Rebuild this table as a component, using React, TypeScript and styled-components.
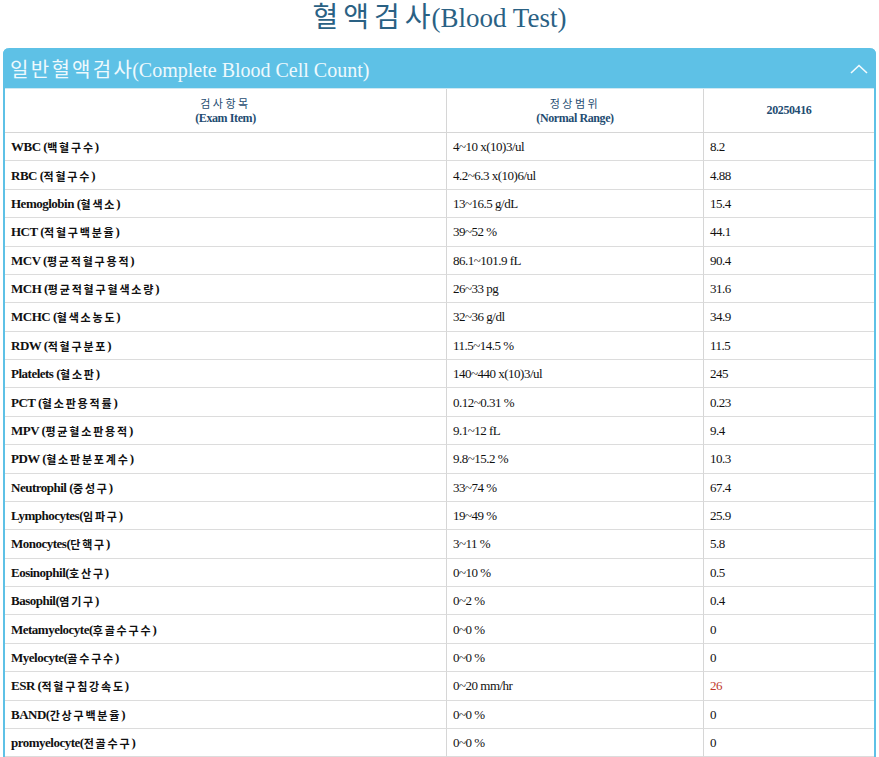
import * as React from 'react'
import styled, { createGlobalStyle } from 'styled-components'

const serif = `'Liberation Serif', 'Noto Sans CJK KR', serif`

const GlobalStyle = createGlobalStyle`
  html, body {
    margin: 0;
    padding: 0;
    background: #fff;
  }
  body {
    font-family: ${serif};
  }
`

type Row = { name: string; range: string; value: string; high?: boolean }

const rows: Row[] = [
  { name: 'WBC (백혈구수)', range: '4~10 x(10)3/ul', value: '8.2' },
  { name: 'RBC (적혈구수)', range: '4.2~6.3 x(10)6/ul', value: '4.88' },
  { name: 'Hemoglobin (혈색소)', range: '13~16.5 g/dL', value: '15.4' },
  { name: 'HCT (적혈구백분율)', range: '39~52 %', value: '44.1' },
  { name: 'MCV (평균적혈구용적)', range: '86.1~101.9 fL', value: '90.4' },
  { name: 'MCH (평균적혈구혈색소량)', range: '26~33 pg', value: '31.6' },
  { name: 'MCHC (혈색소농도)', range: '32~36 g/dl', value: '34.9' },
  { name: 'RDW (적혈구분포)', range: '11.5~14.5 %', value: '11.5' },
  { name: 'Platelets (혈소판)', range: '140~440 x(10)3/ul', value: '245' },
  { name: 'PCT (혈소판용적률)', range: '0.12~0.31 %', value: '0.23' },
  { name: 'MPV (평균혈소판용적)', range: '9.1~12 fL', value: '9.4' },
  { name: 'PDW (혈소판분포계수)', range: '9.8~15.2 %', value: '10.3' },
  { name: 'Neutrophil (중성구)', range: '33~74 %', value: '67.4' },
  { name: 'Lymphocytes(임파구)', range: '19~49 %', value: '25.9' },
  { name: 'Monocytes(단핵구)', range: '3~11 %', value: '5.8' },
  { name: 'Eosinophil(호산구)', range: '0~10 %', value: '0.5' },
  { name: 'Basophil(염기구)', range: '0~2 %', value: '0.4' },
  { name: 'Metamyelocyte(후골수구수)', range: '0~0 %', value: '0' },
  { name: 'Myelocyte(골수구수)', range: '0~0 %', value: '0' },
  { name: 'ESR (적혈구침강속도)', range: '0~20 mm/hr', value: '26', high: true },
  { name: 'BAND(간상구백분율)', range: '0~0 %', value: '0' },
  { name: 'promyelocyte(전골수구)', range: '0~0 %', value: '0' },
]

const Page = styled.div`
  width: 879px;
  height: 757px;
  overflow: hidden;
`

const Title = styled.h1`
  margin: 0;
  height: 48px;
  padding-top: 1px;
  box-sizing: border-box;
  text-align: center;
  font-family: ${serif};
  font-weight: 400;
  font-size: 27px;
  line-height: 34px;
  color: #2a6184;
`

const TitleKo = styled.span`
  font-size: 28px;
  letter-spacing: 5px;
  margin-right: -4px;
`

const Panel = styled.section`
  margin: 0 3px;
  border: 2px solid #5ec1e6;
  border-top: none;
  border-radius: 6px 6px 0 0;
`

const PanelHeader = styled.div`
  display: flex;
  align-items: center;
  justify-content: space-between;
  height: 40px;
  padding: 0 8px 0 7px;
  margin: 0 -2px;
  background: #5ec1e6;
  border-radius: 6px 6px 0 0;
  color: #eef9fd;
  font-family: ${serif};
  font-size: 20px;
`

const HeaderKo = styled.span`
  letter-spacing: 2.3px;
  margin-right: -2px;
`

const Chevron = styled.svg`
  width: 18px;
  height: 10px;
  margin-top: 2px;
`

const Table = styled.div`
  display: grid;
  grid-template-columns: 441px 257px 1fr;
  background: #fff;
  border-top: 1px solid #cfe9f3;
`

const HeadCell = styled.div<{ $first?: boolean }>`
  height: 44px;
  box-sizing: border-box;
  display: flex;
  flex-direction: column;
  align-items: center;
  justify-content: center;
  border-bottom: 1px solid #d6d6d6;
  border-left: ${({ $first }) => ($first ? 'none' : '1px solid #d6d6d6')};
  color: #1f4d72;
  font-size: 12px;
  line-height: 15px;
`

const HeadKo = styled.span`
  font-family: 'Noto Sans CJK KR', sans-serif;
  font-size: 11px;
  letter-spacing: 2.5px;
`

const HeadEn = styled.span`
  font-family: ${serif};
  font-weight: 700;
  letter-spacing: -0.4px;
`

const Cell = styled.div<{ $first?: boolean; $bold?: boolean; $alert?: boolean }>`
  height: 28.38px;
  box-sizing: border-box;
  display: flex;
  align-items: center;
  padding: 1px 6px 0;
  border-bottom: 1px solid #dcdcdc;
  border-left: ${({ $first }) => ($first ? 'none' : '1px solid #d6d6d6')};
  font-family: ${serif};
  font-size: 13px;
  font-weight: ${({ $bold }) => ($bold ? 700 : 400)};
  letter-spacing: -0.5px;
  color: ${({ $alert }) => ($alert ? '#c0392b' : '#111')};
  white-space: nowrap;
`

const Ko = styled.span`
  font-family: 'Noto Sans CJK KR', sans-serif;
  font-size: 11px;
  letter-spacing: 1.8px;
`

const renderName = (name: string) =>
  name.split(/([가-힣]+)/).map((part, i) =>
    /[가-힣]/.test(part) ? <Ko key={i}>{part}</Ko> : <React.Fragment key={i}>{part}</React.Fragment>
  )

export default function App() {
  return (
    <Page>
      <GlobalStyle />
      <Title>
        <TitleKo>혈액검사</TitleKo>(Blood Test)
      </Title>
      <Panel>
        <PanelHeader>
          <span>
            <HeaderKo>일반혈액검사</HeaderKo>(Complete Blood Cell Count)
          </span>
          <Chevron viewBox="0 0 18 10">
            <polyline points="1,9 9,1.5 17,9" fill="none" stroke="#f4fbfe" strokeWidth="1.6" />
          </Chevron>
        </PanelHeader>
        <Table>
          <HeadCell $first>
            <HeadKo>검사항목</HeadKo>
            <HeadEn>(Exam Item)</HeadEn>
          </HeadCell>
          <HeadCell>
            <HeadKo>정상범위</HeadKo>
            <HeadEn>(Normal Range)</HeadEn>
          </HeadCell>
          <HeadCell>
            <HeadEn>20250416</HeadEn>
          </HeadCell>
          {rows.map((r) => (
            <React.Fragment key={r.name}>
              <Cell $first $bold>{renderName(r.name)}</Cell>
              <Cell>{r.range}</Cell>
              <Cell $alert={r.high}>{r.value}</Cell>
            </React.Fragment>
          ))}
        </Table>
      </Panel>
    </Page>
  )
}
